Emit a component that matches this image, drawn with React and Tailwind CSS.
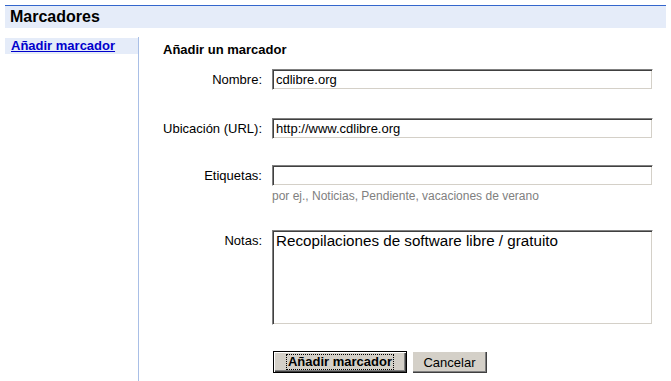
import React from "react";

const inset =
  "block border border-t-[#808080] border-l-[#808080] border-r-white border-b-white shadow-[inset_1px_1px_0_#404040,inset_-1px_-1px_0_#d4d0c8] bg-white outline-none text-black font-['Liberation_Sans',Arial,sans-serif]";

function Row({ label, children, labelPt = "pt-[3px]" }) {
  return (
    <div className="flex leading-[15px]">
      <div className={`w-[99px] text-right text-[13px] leading-[15px] text-black ${labelPt}`}>{label}</div>
      <div className="ml-[10px] w-[381px]">{children}</div>
    </div>
  );
}

export default function App() {
  return (
    <div className="w-[671px] h-[381px] bg-white overflow-hidden font-['Liberation_Sans',Arial,sans-serif] text-black">
      <div className="mx-[5px] mt-[5px] border-t border-[#3366cc] bg-[#e5ecf9] h-[23px] pl-[5px] text-[16px] font-bold leading-[22px]">
        Marcadores
      </div>
      <div className="flex mt-[9px] ml-[5px]">
        <div className="w-[134px] border-r border-[#a9bfe6] h-[344px] shrink-0 pt-[1px]">
          <div className="bg-[#e5ecf9] h-[16px] pl-[6px] text-[13px] leading-[16px] font-bold">
            <a href="#" className="text-[#0000cc] underline">Añadir marcador</a>
          </div>
        </div>
        <div className="pl-[24px] pt-[5px]">
          <div className="text-[13px] leading-[15px] font-bold">Añadir un marcador</div>
          <div className="mt-[12px]">
            <Row label="Nombre:">
              <input readOnly value="cdlibre.org" className={`${inset} w-[381px] h-[21px] px-[3px] text-[13px]`} />
            </Row>
          </div>
          <div className="mt-[28px]">
            <Row label="Ubicación (URL):">
              <input readOnly value="http://www.cdlibre.org" className={`${inset} w-[381px] h-[21px] px-[3px] text-[13px]`} />
            </Row>
          </div>
          <div className="mt-[26px]">
            <Row label="Etiquetas:">
              <input readOnly value="" className={`${inset} w-[381px] h-[21px] px-[3px] text-[13px]`} />
              <div className="mt-[3px] text-[12px] leading-[15px] text-[#808080]">
                por ej., Noticias, Pendiente, vacaciones de verano
              </div>
            </Row>
          </div>
          <div className="mt-[26px]">
            <Row label="Notas:">
              <textarea
                readOnly
                value="Recopilaciones de software libre / gratuito"
                className={`${inset} w-[381px] h-[95px] px-[3px] py-[1px] text-[15.2px] leading-[18px] resize-none`}
              />
            </Row>
          </div>
          <div className="mt-[26px] ml-[110px] flex gap-[5px]">
            <button className="h-[22px] w-[134px] border border-black bg-[#d4d0c8] shadow-[inset_1px_1px_0_#fff,inset_-1px_-1px_0_#404040,inset_-2px_-2px_0_#808080] flex items-center justify-center">
              <span className="border border-dotted border-black px-[1px] text-[13px] leading-[14px] font-bold">Añadir marcador</span>
            </button>
            <button className="h-[22px] w-[75px] bg-[#d4d0c8] shadow-[inset_1px_1px_0_#fff,inset_-1px_-1px_0_#404040,inset_-2px_-2px_0_#808080] text-[13px] leading-[15px]">
              Cancelar
            </button>
          </div>
        </div>
      </div>
    </div>
  );
}
